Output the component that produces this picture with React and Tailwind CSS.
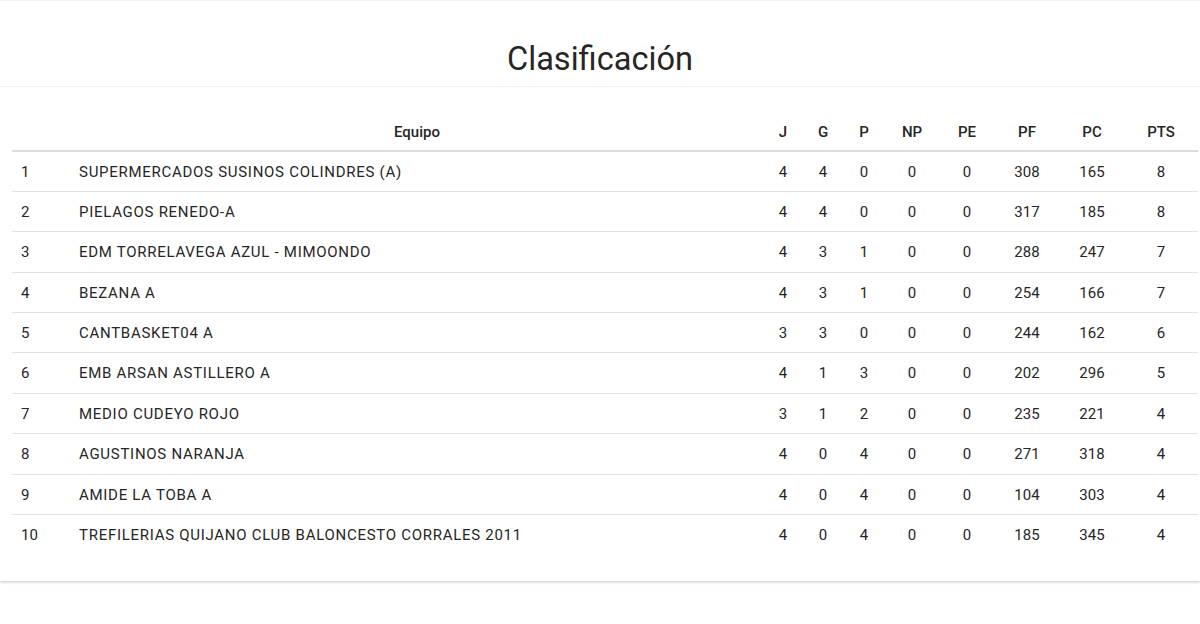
const rows = [
  [1, 'SUPERMERCADOS SUSINOS COLINDRES (A)', 4, 4, 0, 0, 0, 308, 165, 8],
  [2, 'PIELAGOS RENEDO-A', 4, 4, 0, 0, 0, 317, 185, 8],
  [3, 'EDM TORRELAVEGA AZUL - MIMOONDO', 4, 3, 1, 0, 0, 288, 247, 7],
  [4, 'BEZANA A', 4, 3, 1, 0, 0, 254, 166, 7],
  [5, 'CANTBASKET04 A', 3, 3, 0, 0, 0, 244, 162, 6],
  [6, 'EMB ARSAN ASTILLERO A', 4, 1, 3, 0, 0, 202, 296, 5],
  [7, 'MEDIO CUDEYO ROJO', 3, 1, 2, 0, 0, 235, 221, 4],
  [8, 'AGUSTINOS NARANJA', 4, 0, 4, 0, 0, 271, 318, 4],
  [9, 'AMIDE LA TOBA A', 4, 0, 4, 0, 0, 104, 303, 4],
  [10, 'TREFILERIAS QUIJANO CLUB BALONCESTO CORRALES 2011', 4, 0, 4, 0, 0, 185, 345, 4],
];

const stats = ['J', 'G', 'P', 'NP', 'PE', 'PF', 'PC', 'PTS'];

export default function App() {
  return (
    <div className="min-h-screen bg-white font-['Roboto',sans-serif] text-[#262626]">
      <header className="flex h-[87px] items-end justify-center border-y border-[#f2f2f2] pb-[10px]">
        <h1 className="text-[32.6px] leading-none font-normal">Clasificación</h1>
      </header>

      <section className="pl-3 pr-[2px] pt-[24px] pb-[26px] shadow-[0_2px_2px_rgba(0,0,0,0.14)]">
        <table className="w-full table-fixed border-collapse text-[15px]">
          <colgroup>
            <col className="w-[58px]" />
            <col />
            <col className="w-[38px]" />
            <col className="w-[42px]" />
            <col className="w-[40px]" />
            <col className="w-[56px]" />
            <col className="w-[54px]" />
            <col className="w-[66px]" />
            <col className="w-[64px]" />
            <col className="w-[74px]" />
          </colgroup>
          <thead>
            <tr className="h-[40px] border-b-2 border-[#dcdcdc]">
              <th className="pt-[4px]"></th>
              <th className="pt-[4px] text-center font-medium">Equipo</th>
              {stats.map((s) => (
                <th key={s} className="pt-[4px] text-center font-medium">{s}</th>
              ))}
            </tr>
          </thead>
          <tbody>
            {rows.map((r, i) => (
              <tr
                key={r[0]}
                className={i < rows.length - 1 ? 'h-[40.4px] border-b border-[#e3e3e3]' : 'h-[40.4px]'}
              >
                <td className="pt-[1px] pl-[9px] text-left">{r[0]}</td>
                <td className="pt-[1px] pl-[9px] text-left tracking-[0.72px]">{r[1]}</td>
                {r.slice(2).map((v, j) => (
                  <td key={j} className="pt-[1px] text-center">{v}</td>
                ))}
              </tr>
            ))}
          </tbody>
        </table>
      </section>
    </div>
  );
}
